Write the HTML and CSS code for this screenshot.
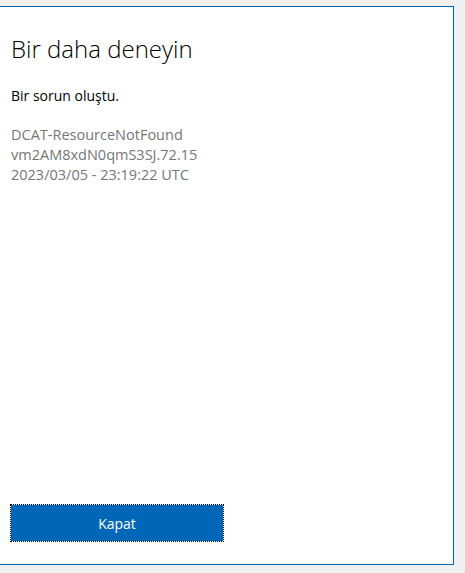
FILE: index.html
```html
<!DOCTYPE html>
<html lang="tr">
<head>
<meta charset="utf-8">
<title>Bir daha deneyin</title>
<link rel="stylesheet" href="styles.css">
</head>
<body>
<div class="panel">
  <div class="content">
    <h1 class="title">Bir daha deneyin</h1>
    <p class="message">Bir sorun oluştu.</p>
    <div class="details">
      <div>DCAT-ResourceNotFound</div>
      <div>vm2AM8xdN0qmS3SJ.72.15</div>
      <div>2023/03/05 - 23:19:22 UTC</div>
    </div>
  </div>
  <div class="footer">
    <button class="btn">Kapat</button>
  </div>
</div>
</body>
</html>
```
FILE: styles.css
```css
html, body {
  margin: 0;
  padding: 0;
  background: #f0f0f0;
}
body {
  padding-top: 6px;
  font-family: "Open Sans", "Noto Sans", sans-serif;
}
.panel {
  box-sizing: border-box;
  width: 454px;
  height: 559px;
  background: #ffffff;
  border-top: 1px solid #0067b8;
  border-right: 1px solid #0067b8;
  border-bottom: 1px solid #0067b8;
  display: flex;
  flex-direction: column;
}
.content {
  padding: 0 11px;
}
.title {
  margin: 26px 0 0;
  font-weight: 300;
  font-size: 24px;
  line-height: 32px;
  color: #000;
}
.message {
  margin: 21px 0 0;
  font-size: 14px;
  line-height: 20px;
  color: #000;
}
.details {
  margin-top: 19px;
  font-size: 14.5px;
  line-height: 20px;
  color: #767676;
}
.footer {
  margin-top: auto;
  padding: 0 10px 22px;
}
.btn {
  box-sizing: border-box;
  width: 214px;
  height: 38px;
  background: #0067b8;
  color: #ffffff;
  border: 1px solid #ffffff;
  outline: 1px dotted #000;
  outline-offset: -1px;
  font-family: "Open Sans", "Noto Sans", sans-serif;
  font-size: 14px;
  padding: 0;
  display: block;
}
```
